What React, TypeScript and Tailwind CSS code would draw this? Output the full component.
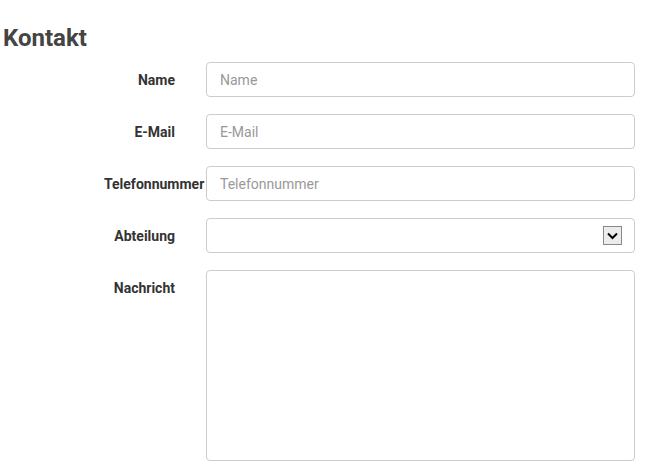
export default function App() {
  const rows = [
    { l: "Name", p: "Name", top: "pt-[9px]" },
    { l: "E-Mail", p: "E-Mail" },
    { l: "Telefonnummer", p: "Telefonnummer" },
  ];
  const input = "h-[35px] w-[429px] rounded-[4px] border border-[#cccccc] bg-white px-[13px] text-[14px] text-[#555] placeholder:text-[#999] outline-none";
  const label = "w-[71px] shrink-0 whitespace-nowrap text-left font-bold text-[14px] text-[#333] pt-[8px]";
  return (
    <div className="min-h-[473px] bg-white" style={{ fontFamily: "Roboto, 'Liberation Sans', sans-serif" }}>
      <h1 className="pl-[3px] pt-[23px] text-[24px] font-bold leading-[30px] text-[#444]">Kontakt</h1>
      <div className="mt-[9px] ml-[104px] flex flex-col gap-[17px]">
        {rows.map((r) => (
          <div key={r.l} className="flex gap-[31px]">
            <div className={label} style={{ direction: r.l === "Telefonnummer" ? "ltr" : "ltr" }}>
              <div className={r.l === "Telefonnummer" ? "" : "text-right"}>{r.l}</div>
            </div>
            <input className={input + " relative"} placeholder={r.p} />
          </div>
        ))}
        <div className="flex gap-[31px]">
          <div className={label}><div className="text-right">Abteilung</div></div>
          <div className={input + " flex items-center justify-end pr-[12px]"}>
            <div className="flex h-[19px] w-[19px] items-center justify-center border border-[#888] bg-[#ececec]">
              <svg width="11" height="8" viewBox="0 0 11 8"><path d="M1 1.5 L5.5 6 L10 1.5" fill="none" stroke="#000" strokeWidth="2" /></svg>
            </div>
          </div>
        </div>
        <div className="flex gap-[31px]">
          <div className={label}><div className="text-right">Nachricht</div></div>
          <textarea className="h-[191px] w-[429px] resize-none rounded-[4px] border border-[#cccccc] bg-white outline-none" />
        </div>
      </div>
    </div>
  );
}
